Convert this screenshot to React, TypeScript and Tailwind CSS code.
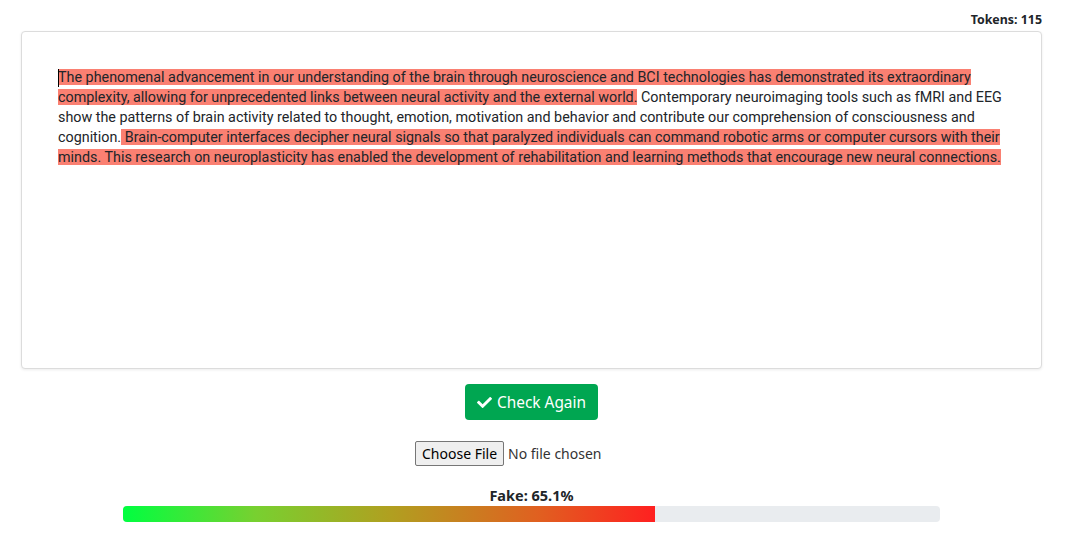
import { FaCheck } from 'react-icons/fa';

const segments: { text: string; hl: boolean }[] = [
  {
    text: 'The phenomenal advancement in our understanding of the brain through neuroscience and BCI technologies has demonstrated its extraordinary complexity, allowing for unprecedented links between neural activity and the external world.',
    hl: true,
  },
  {
    text: ' Contemporary neuroimaging tools such as fMRI and EEG show the patterns of brain activity related to thought, emotion, motivation and behavior and contribute our comprehension of consciousness and cognition.',
    hl: false,
  },
  {
    text: ' Brain-computer interfaces decipher neural signals so that paralyzed individuals can command robotic arms or computer cursors with their minds. This research on neuroplasticity has enabled the development of rehabilitation and learning methods that encourage new neural connections.',
    hl: true,
  },
];

const FAKE = 65.1;

export default function App() {
  return (
    <div className="min-h-[537px] bg-white pl-[21px] pr-[29px] font-['Segoe_UI','Noto_Sans',sans-serif] text-[#212529]">
      <div className="flex justify-end pt-[12px] pb-[3px]">
        <span className="text-[12.4px] font-bold leading-[16px]">Tokens: 115</span>
      </div>

      <div className="h-[338px] rounded border border-[#dcdcdc] bg-white px-[36px] pt-[35px] shadow-[0_1px_3px_rgba(0,0,0,0.08)]">
        <p className="font-['Roboto',sans-serif] text-[14.33px] leading-[20px] text-[#212529]">
          <span className="relative">
            <span className="absolute left-0 top-0 h-[18px] w-px bg-black" />
          </span>
          {segments.map((s, i) => (
            <span key={i} className={s.hl ? 'bg-[#fa8072]' : ''}>
              {s.text}
            </span>
          ))}
        </p>
      </div>

      <div className="mt-[15px] flex justify-center">
        <button className="flex h-[36px] items-center gap-[5px] rounded bg-[#00a651] px-[12px] pt-[1px] text-[15.4px] text-white">
          <FaCheck className="h-[15px] w-[15px]" />
          Check Again
        </button>
      </div>

      <div className="mt-[21px] flex justify-center">
        <input
          type="file"
          className="w-[233px] text-[14px] leading-[19px] text-[#333] file:mr-[4px] file:rounded-[2px] file:border file:border-[#767676] file:bg-[#efefef] file:px-[6px] file:py-[2px] file:text-[14px] file:text-black"
        />
      </div>

      <div className="mt-[20px] flex flex-col items-center">
        <div className="text-[14.5px] font-bold leading-[18px]">Fake: {FAKE}%</div>
        <div className="mt-[2px] h-[16px] w-[817px] overflow-hidden rounded bg-[#e9ecef]">
          <div
            className="h-full bg-[linear-gradient(to_right,#00ff40_0%,#78d030_25%,#b0a020_50%,#e06020_78%,#ff2020_100%)]"
            style={{ width: `${FAKE}%` }}
          />
        </div>
      </div>
    </div>
  );
}
